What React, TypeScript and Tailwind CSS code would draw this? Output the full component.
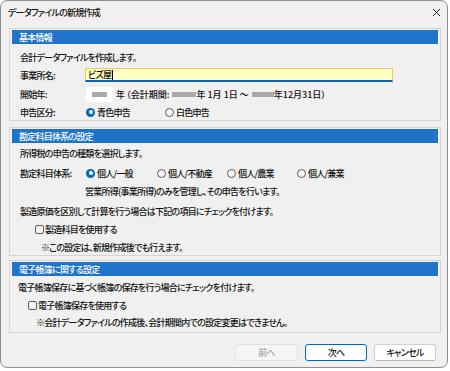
import React from "react";

const font = "font-['Noto_Sans_CJK_JP','Noto_Sans',sans-serif] [font-feature-settings:'palt'] tracking-[-0.75px] font-medium";

const Radio = ({ checked, label }: { checked?: boolean; label: string }) => (
  <span className="flex items-center gap-[2px]">
    {checked ? (
      <span className="flex items-center justify-center w-[9px] h-[9px] rounded-full bg-[#0067c0]">
        <span className="w-[4px] h-[4px] rounded-full bg-white" />
      </span>
    ) : (
      <span className="w-[9px] h-[9px] rounded-full border border-[#5c5c5c] bg-[#f6f6f6]" />
    )}
    <span>{label}</span>
  </span>
);

const Check = ({ label }: { label: string }) => (
  <span className="flex items-center gap-[1px]">
    <span className="w-[9px] h-[9px] rounded-[2px] border border-[#5c5c5c] bg-[#f6f6f6]" />
    <span>{label}</span>
  </span>
);

const Blur = ({ w }: { w: number }) => (
  <span
    className="inline-block h-[5px] bg-[#a9a9a9] blur-[0.6px]"
    style={{ width: w }}
  />
);

const GroupHeader = ({ title }: { title: string }) => (
  <div className="h-[14px] bg-[#1f73c9] text-white flex items-center pl-[7px]">
    {title}
  </div>
);

export default function App() {
  return (
    <div className={`w-[450px] h-[371px] bg-white text-[9px] leading-none text-[#111] ${font}`}>
      <div className="w-[448px] h-[368px] border border-[#8e8e8e] rounded-[7px] bg-[#f0f0f0] flex flex-col overflow-hidden">
        {/* title bar */}
        <div className="h-[22px] flex items-center justify-between pl-[7px] pr-[5px] shrink-0">
          <span>データファイルの新規作成</span>
          <svg width="9" height="9" viewBox="0 0 9 9" className="mr-[1px]">
            <path d="M1 1 L8 8 M8 1 L1 8" stroke="#222" strokeWidth="1" />
          </svg>
        </div>

        <div className="flex flex-col pl-[8px] pr-[6px] pt-[5px]">
          {/* 基本情報 */}
          <section className="border border-[#d4d4d4] pt-[1px] px-[2px] pb-[2px]">
            <GroupHeader title="基本情報" />
            <div className="pl-[8px] flex flex-col">
              <div className="h-[14px] mt-[6px] flex items-center">
                会計データファイルを作成します。
              </div>
              <div className="h-[14px] mt-[4px] flex items-center">
                <span className="w-[65px]">事業所名:</span>
                <span className="w-[308px] h-[14px] bg-[#ffffc2] border border-[#f2c75c] border-b-2 border-b-[#0b62b8] flex items-center pl-[2px]">
                  ビズ屋
                  <span className="w-[1px] h-[10px] bg-black ml-[1px]" />
                </span>
              </div>
              <div className="h-[15px] mt-[5px] flex items-center">
                <span className="w-[66px]">開始年:</span>
                <span className="w-[26px] h-[15px] bg-white flex items-center justify-center">
                  <Blur w={15} />
                </span>
                <span className="ml-[4px]">年</span>
                <span className="ml-[2px] tracking-normal">（会計期間:</span>
                <span className="ml-[3px] flex"><Blur w={24} /></span>
                <span className="tracking-normal">年 1月 1日 ～ </span>
                <span className="ml-[3px] flex"><Blur w={22} /></span>
                <span className="tracking-normal">年12月31日）</span>
              </div>
              <div className="h-[12px] mt-[4px] flex items-center">
                <span className="w-[66px]">申告区分:</span>
                <span className="w-[79px]"><Radio checked label="青色申告" /></span>
                <Radio label="白色申告" />
              </div>
            </div>
          </section>

          {/* 勘定科目体系の設定 */}
          <section className="mt-[6px] border border-[#d4d4d4] pt-[1px] px-[2px] pb-[1px]">
            <GroupHeader title="勘定科目体系の設定" />
            <div className="pl-[8px] flex flex-col">
              <div className="h-[14px] mt-[3px] flex items-center">
                所得税の申告の種類を選択します。
              </div>
              <div className="h-[14px] mt-[6px] flex items-center">
                <span className="w-[66px]">勘定科目体系:</span>
                <span className="w-[71px]"><Radio checked label="個人/一般" /></span>
                <span className="w-[70px]"><Radio label="個人/不動産" /></span>
                <span className="w-[70px]"><Radio label="個人/農業" /></span>
                <Radio label="個人/兼業" />
              </div>
              <div className="h-[14px] mt-[4px] flex items-center pl-[65px]">
                営業所得(事業所得)のみを管理し、その申告を行います。
              </div>
              <div className="h-[14px] mt-[6px] flex items-center">
                製造原価を区別して計算を行う場合は下記の項目にチェックを付けます。
              </div>
              <div className="h-[14px] mt-[4px] flex items-center pl-[15px]">
                <Check label="製造科目を使用する" />
              </div>
              <div className="h-[14px] mt-[4px] flex items-center pl-[21px]">
                ※この設定は、新規作成後でも行えます。
              </div>
            </div>
          </section>

          {/* 電子帳簿に関する設定 */}
          <section className="mt-[4px] border border-[#d4d4d4] pt-[1px] px-[2px] pb-[3px]">
            <GroupHeader title="電子帳簿に関する設定" />
            <div className="pl-[6px] flex flex-col">
              <div className="h-[14px] mt-[4px] flex items-center">
                電子帳簿保存に基づく帳簿の保存を行う場合にチェックを付けます。
              </div>
              <div className="h-[14px] mt-[4px] flex items-center pl-[10px]">
                <Check label="電子帳簿保存を使用する" />
              </div>
              <div className="h-[14px] mt-[3px] flex items-center pl-[18px]">
                ※会計データファイルの作成後、会計期間内での設定変更はできません。
              </div>
            </div>
          </section>
        </div>

        {/* footer */}
        <div className="mt-auto flex justify-end gap-[7px] pr-[11px] pb-[6px]">
          <button className="w-[63px] h-[17px] rounded-[3px] border border-[#e2e2e2] bg-[#f5f5f5] text-[#a2a2a2]">
            前へ
          </button>
          <button className="w-[62px] h-[17px] rounded-[3px] border border-[#0067c0] bg-white text-[#111]">
            次へ
          </button>
          <button className="w-[62px] h-[17px] rounded-[3px] border border-[#d0d0d0] border-b-[#b8b8b8] bg-white text-[#111]">
            キャンセル
          </button>
        </div>
      </div>
    </div>
  );
}
